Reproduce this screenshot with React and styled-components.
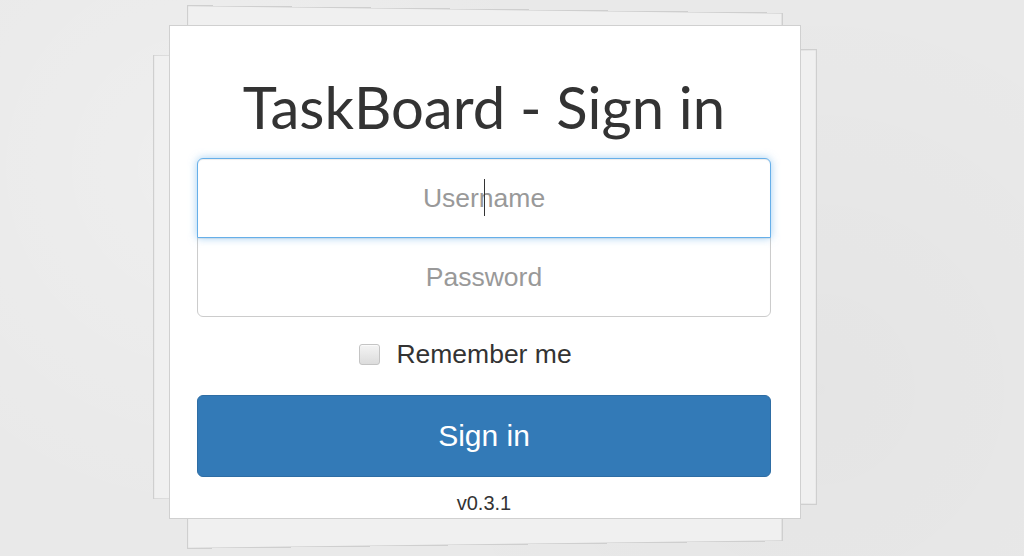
import React from 'react'
import styled, { createGlobalStyle } from 'styled-components'

const GlobalStyle = createGlobalStyle`
  html, body {
    margin: 0;
    padding: 0;
    background: #e9e9e9;
    font-family: "Liberation Sans", Arial, sans-serif;
    color: #333;
  }
  * { box-sizing: border-box; }
`

const Page = styled.div`
  min-height: 556px;
  padding: 25px 0 0 169px;
  background:
    radial-gradient(circle at 20% 30%, rgba(255,255,255,.25), transparent 40%),
    radial-gradient(circle at 80% 70%, rgba(0,0,0,.02), transparent 45%),
    #e9e9e9;
  overflow: hidden;
`

// the two sheets under the card, tilted a bit in depth
const Stack = styled.div`
  position: relative;
  width: 632px;
  height: 494px;

  &::before, &::after {
    content: '';
    position: absolute;
    background: #f0f0f0;
    border: 1px solid #cfcfcf;
  }
  &::before {
    left: 22px;
    top: -16px;
    width: 594px;
    height: 534px;
    transform: perspective(1000px) rotateY(2.7deg);
  }
  &::after {
    left: -20px;
    top: 27px;
    width: 662px;
    height: 448px;
    transform: perspective(1000px) rotateY(-2.1deg);
  }
`

const Card = styled.form`
  position: relative;
  z-index: 1;
  display: flex;
  flex-direction: column;
  height: 100%;
  padding: 49px 29px 0 27px;
  background: #fff;
  border: 1px solid #d0d0d0;
`

const Title = styled.h1`
  margin: 0 0 19px;
  font-family: Lato, "Open Sans", sans-serif;
  font-weight: 400;
  font-size: 58px;
  line-height: 64px;
  text-align: center;
  color: #333;
`

const Field = styled.div`
  position: relative;
  z-index: ${p => (p.$focused ? 2 : 1)};
  margin-top: ${p => (p.$first ? 0 : -1)}px;
`

const Input = styled.input`
  display: block;
  width: 100%;
  height: 80px;
  padding: 0 16px;
  font-family: "Liberation Sans", Arial, sans-serif;
  font-size: 26.5px;
  text-align: center;
  color: #555;
  background: #fff;
  outline: none;
  border: 1px solid ${p => (p.$focused ? '#66afe9' : '#ccc')};
  border-radius: ${p => (p.$first ? '6px 6px 0 0' : '0 0 6px 6px')};
  box-shadow: ${p => (p.$focused
    ? 'inset 0 1px 1px rgba(0,0,0,.075), 0 0 8px rgba(102,175,233,.6)'
    : 'inset 0 1px 1px rgba(0,0,0,.075)')};

  &::placeholder { color: #999; }
`

const Caret = styled.span`
  position: absolute;
  left: 50%;
  top: 21px;
  width: 1px;
  height: 37px;
  margin-left: 0;
  background: #333;
  pointer-events: none;
`

const CheckRow = styled.label`
  display: flex;
  align-items: center;
  justify-content: center;
  gap: 16px;
  margin-top: 18px;
  padding-right: 37px;
  height: 38px;
  font-size: 26.5px;
  color: #333;
  cursor: pointer;
`

const Box = styled.span`
  width: 21px;
  height: 21px;
  border: 1px solid #c4c4c4;
  border-radius: 3px;
  background: linear-gradient(#f4f4f4, #dcdcdc);
  box-shadow: inset 0 1px 0 rgba(255,255,255,.6);
`

const Button = styled.button`
  margin-top: 22px;
  height: 82px;
  border: 1px solid #2e6da4;
  border-radius: 6px;
  background: #337ab7;
  color: #fff;
  font-family: "Liberation Sans", Arial, sans-serif;
  font-size: 30px;
  cursor: pointer;
`

const Version = styled.div`
  margin-top: 13px;
  font-size: 20px;
  line-height: 26px;
  text-align: center;
  color: #333;
`

export default function App() {
  return (
    <Page>
      <GlobalStyle />
      <Stack>
        <Card onSubmit={e => e.preventDefault()}>
          <Title>TaskBoard - Sign in</Title>
          <Field $first $focused>
            <Input $first $focused type="text" placeholder="Username" />
            <Caret />
          </Field>
          <Field>
            <Input type="password" placeholder="Password" />
          </Field>
          <CheckRow>
            <Box />
            Remember me
          </CheckRow>
          <Button type="submit">Sign in</Button>
          <Version>v0.3.1</Version>
        </Card>
      </Stack>
    </Page>
  )
}
